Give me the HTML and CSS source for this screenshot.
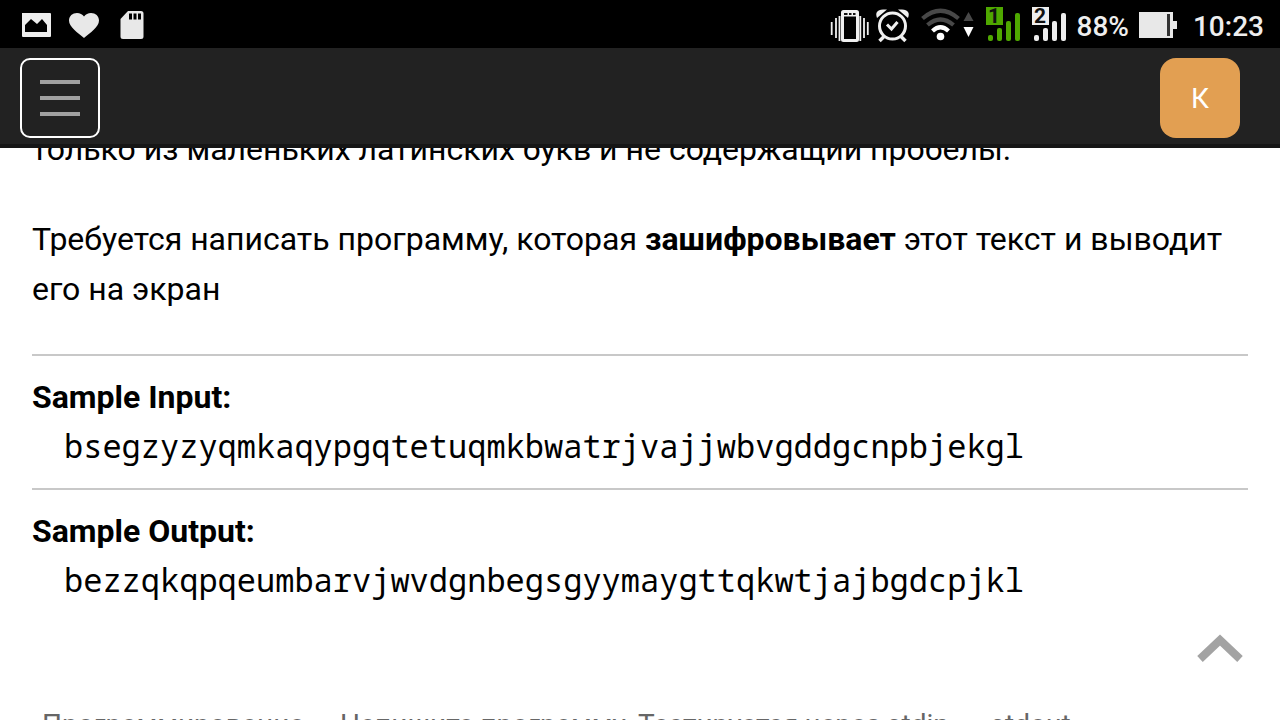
FILE: index.html
```html
<!DOCTYPE html>
<html lang="ru">
<head>
<meta charset="utf-8">
<meta name="viewport" content="width=device-width, initial-scale=1">
<title>Sample Input</title>
<link rel="stylesheet" href="styles.css">
</head>
<body>
<div class="status">
  <svg class="status-left" width="150" height="48" viewBox="0 0 150 48" aria-hidden="true">
    <path fill="#eee" fill-rule="evenodd" d="M22 13h28q1 0 1 1v22q0 1-1 1H23q-1 0-1-1zM25 32h22v-7l-5-6-5 5-6-5-6 6z"/>
    <path fill="#e8e8e8" d="M84 38C78 33 69 27 69 20.500C69 16 72.500 13 77 13Q81.500 13 84 16.500Q86.500 13 91 13C95.500 13 99 16 99 20.500C99 27 90 33 84 38z"/>
    <path fill="#e8e8e8" fill-rule="evenodd" d="M128 11h13q2.500 0 2.500 2.500v23q0 2.500-2.500 2.500h-18q-2.500 0-2.500-2.500V19zM129 13.500v6h3v-6zM133.500 13.500v6h3v-6zM138 13.500v6h3v-6z"/>
  </svg>
  <div class="status-right">
    <svg width="249" height="48" viewBox="828 0 249 48" role="img" aria-label="Wi-Fi, SIM 1, SIM 2">
      <g fill="none" stroke="#f0f0f0">
        <path stroke-width="1.800" d="M831.700 22v13M836 18v20M839.500 16v25M860.300 16v25M864 18v20M867.800 22v13"/>
        <rect x="842.500" y="11.500" width="15" height="29" rx="1" stroke-width="3"/>
        <path stroke-width="5" d="M842 14h16"/>
        <circle cx="892.500" cy="26" r="13" stroke-width="3"/>
        <path stroke-width="3" d="M887 24.500l4.500 4.500 6-7"/>
        <path stroke-width="3.500" d="M884 36.500l-4.500 4.500M901 36.500l4.500 4.500"/>
      </g>
      <path fill="#111" d="M844 13h3.500v2H844zM849 13h2.500v2H849zM853 13h2.500v2H853z"/>
      <path fill="#f0f0f0" d="M877 18q-3-8 6-8.500h4zM908 18q3-8-6-8.500h-4z"/>
      <g fill="none" stroke-width="4.200">
        <path stroke="#484848" d="M922.500 18.500Q940.500 3 958.500 18.500M927.500 25Q940.500 14 953.500 25"/>
        <path stroke="#fff" d="M932.500 31Q940.500 23.500 948.500 31"/>
      </g>
      <circle cx="940.500" cy="36.500" r="3.800" fill="#fff"/>
      <path fill="#484848" d="M968.500 12l5 9h-10z"/>
      <path fill="#fff" d="M963.500 27h10l-5 10z"/>
      <g fill="#4fa800">
        <rect x="986" y="7" width="17" height="18"/>
        <rect x="988" y="35" width="5" height="6" rx="2"/>
        <rect x="997" y="28" width="5" height="13" rx="2"/>
        <rect x="1006" y="21" width="5" height="20" rx="2"/>
        <rect x="1015" y="13" width="5" height="28" rx="2"/>
      </g>
      <g fill="#eee">
        <rect x="1032" y="7" width="17" height="18"/>
        <rect x="1034" y="35" width="5" height="6" rx="2"/>
        <rect x="1043" y="28" width="5" height="13" rx="2"/>
        <rect x="1052" y="21" width="5" height="20" rx="2"/>
        <rect x="1061" y="13" width="5" height="28" rx="2"/>
      </g>
      <g class="sim"><text x="994" y="23">1</text><text x="1040" y="23">2</text></g>
    </svg>
    <span>88%</span>
    <svg class="battery" width="38" height="26" viewBox="0 0 38 26" aria-hidden="true">
      <path fill="#e8e8e8" d="M0 0h34v9h4v8h-4v9H0z"/>
      <path fill="#333" d="M28 2h3v22h-3z"/>
    </svg>
    <time>10:23</time>
  </div>
</div>
<header class="topbar">
  <button class="menu" type="button" aria-label="Меню"><i></i><i></i><i></i></button>
  <button class="avatar" type="button">К</button>
</header>
<main class="page">
  <article class="content">
    <p>только из маленьких латинских букв и не содержащий пробелы.</p>
    <p>Требуется написать программу, которая <b>зашифровывает</b> этот текст и выводит его на экран</p>
    <section class="sample">
      <h2>Sample Input:</h2>
      <pre>bsegzyzyqmkaqypgqtetuqmkbwatrjvajjwbvgddgcnpbjekgl</pre>
    </section>
    <section class="sample">
      <h2>Sample Output:</h2>
      <pre>bezzqkqpqeumbarvjwvdgnbegsgyymaygttqkwtjajbgdcpjkl</pre>
    </section>
    <p class="hint">Программирование — Напишите программу. Тестируется через stdin → stdout</p>
  </article>
  <button class="to-top" type="button" aria-label="Наверх">
    <svg width="46" height="28" viewBox="0 0 46 28"><path fill="none" stroke="#a3a3a3" stroke-width="8" d="M3 25L23 6l20 19"/></svg>
  </button>
</main>
</body>
</html>
```
FILE: styles.css
```css
* { box-sizing: border-box; }

body {
  margin: 0;
  height: 100vh;
  display: flex;
  flex-direction: column;
  overflow: hidden;
  background: #fff;
  color: #000;
  font-family: Roboto, "Noto Sans", sans-serif;
  font-size: 32px;
  line-height: 50px;
}

button {
  font: inherit;
  padding: 0;
  border: 0;
  background: none;
}

.status {
  flex: none;
  display: flex;
  justify-content: space-between;
  height: 48px;
  padding-right: 16px;
  background: #000;
  color: #eee;
  font-size: 28px;
  font-weight: 500;
  line-height: 54px;
}

.status-right { display: flex; }
.battery { margin: 12px 16px 0 10px; }

.sim {
  fill: #111;
  font-size: 21px;
  font-weight: 700;
  text-anchor: middle;
}

.topbar {
  flex: none;
  display: flex;
  justify-content: space-between;
  height: 100px;
  padding: 10px 40px 0 20px;
  background: #222;
  border-bottom: 4px solid #161616;
}

.menu,
.avatar {
  width: 80px;
  height: 80px;
}

.menu {
  display: flex;
  flex-direction: column;
  align-items: center;
  justify-content: center;
  gap: 12px;
  border: 2px solid #fff;
  border-radius: 10px;
}

.menu i {
  width: 40px;
  height: 4px;
  background: #a0a0a0;
}

.avatar {
  padding-top: 2px;
  border-radius: 16px;
  background: #e29f52;
  color: #fff;
  font-size: 28px;
}

.page {
  flex: 1;
  min-height: 0;
  position: relative;
  overflow: hidden;
}

.content {
  margin-top: -24px;
  padding: 0 32px;
}

.content p { margin: 0 0 40px; }

.sample {
  padding: 16px 0 18px;
  border-top: 2px solid #c8c8c8;
}

.sample h2 {
  margin: 0;
  font-size: inherit;
  font-weight: 700;
}

.sample pre {
  margin: 0;
  padding-left: 32px;
  font-family: "Droid Sans Mono", "Noto Sans Mono", "DejaVu Sans Mono", monospace;
  line-height: 48px;
}

.content .hint {
  margin: 78px 10px 0;
  color: #666;
  font-size: 28px;
}

.to-top {
  position: absolute;
  right: 37px;
  bottom: 58px;
  height: 28px;
}

.to-top svg { display: block; }
```
